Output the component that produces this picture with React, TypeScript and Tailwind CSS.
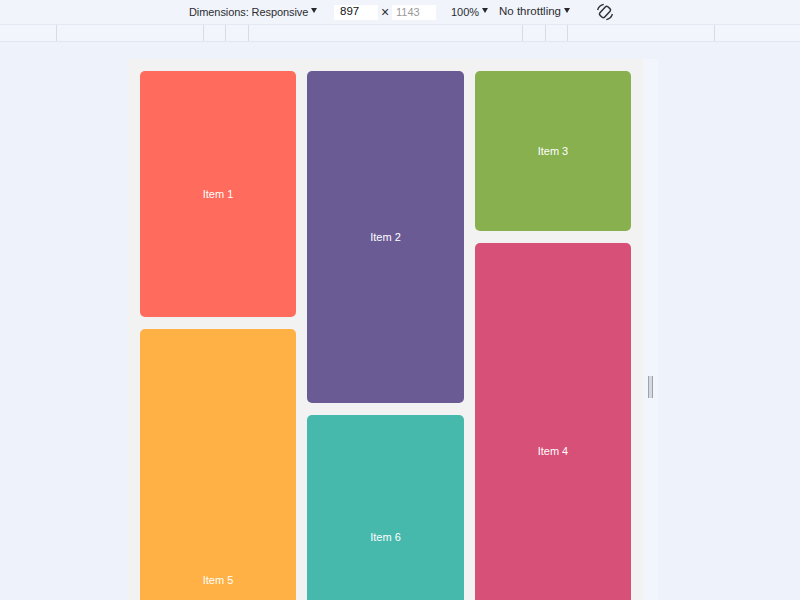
const columns = [
  [
    { label: "Item 1", color: "bg-[#ff6b5c]", height: "h-[246px]" },
    { label: "Item 5", color: "bg-[#ffb146]", height: "h-[502px]" },
  ],
  [
    { label: "Item 2", color: "bg-[#6b5b95]", height: "h-[332px]" },
    { label: "Item 6", color: "bg-[#46b8ac]", height: "h-[244px]" },
  ],
  [
    { label: "Item 3", color: "bg-[#88b04f]", height: "h-[160px]" },
    { label: "Item 4", color: "bg-[#d75077]", height: "h-[416px]" },
  ],
];

const rulerCells = ["w-[57px]", "w-[147px]", "w-[22px]", "w-[23px]", "w-[274px]", "w-[23px]", "w-[22px]", "w-[147px]"];

function Caret() {
  return <span className="ml-[3px] mb-[3px] inline-block h-0 w-0 border-x-[3.5px] border-t-[5px] border-x-transparent border-t-[#26282c]" />;
}

function RotateIcon() {
  return (
    <svg width="18" height="18" viewBox="0 0 18 18" fill="none" stroke="#2f3236" strokeWidth="1.5" className="ml-[26px]">
      <g transform="rotate(42 9 9)">
        <rect x="5.8" y="3.2" width="6.4" height="11.6" rx="1.8" />
        <path d="M3 4.2A8 8 0 0 0 2.2 12.5M15 13.8A8 8 0 0 0 15.8 5.5" strokeWidth="1.4" />
      </g>
    </svg>
  );
}

export default function App() {
  return (
    <div className="flex h-[600px] w-[800px] flex-col overflow-hidden bg-[#eef2fb] font-['Liberation_Sans',sans-serif]">
      <div className="flex h-[25px] shrink-0 items-center border-b border-[#e4e8f2] bg-[#f1f4fb] pl-[189px] text-[11.5px] text-[#2b2d31]">
        <span className="flex w-[145px] items-center text-[11px] tracking-[-0.08px]">Dimensions: Responsive<Caret /></span>
        <span className="flex h-[15px] w-[44px] items-center bg-white pl-[6px] text-[#111318]">897</span>
        <span className="w-[14px] text-center text-[14px] leading-none">×</span>
        <span className="flex h-[15px] w-[44px] items-center bg-white pl-[4px] text-[11px] text-[#9a9a9a]">1143</span>
        <span className="ml-[15px] flex w-[48px] items-center text-[11px]">100%<Caret /></span>
        <span className="flex items-center">No throttling<Caret /></span>
        <RotateIcon />
      </div>
      <div className="flex h-[17px] shrink-0 border-b border-[#e2e6f0] bg-[#f2f5fb]">
        {rulerCells.map((width, index) => (
          <div key={index} className={`${width} h-[16px] shrink-0 border-r border-[#d8dce6]`} />
        ))}
      </div>
      <div className="flex min-h-0 flex-1 pl-[128px] pt-[17px]">
        <div className="w-[515px] shrink-0 bg-[#f2f2f2] px-[12px] pt-[12px]">
          <div className="grid grid-cols-3 gap-x-[11.4px]">
            {columns.map((items, index) => (
              <div key={index} className="flex flex-col gap-[12px]">
                {items.map((item) => (
                  <div
                    key={item.label}
                    className={`${item.color} ${item.height} flex shrink-0 items-center justify-center rounded-[5px] text-[11px] text-white`}
                  >
                    {item.label}
                  </div>
                ))}
              </div>
            ))}
          </div>
        </div>
        <div className="flex h-[656px] w-[15px] shrink-0 items-center justify-center bg-[#f2f5fb]">
          <div className="h-[22px] w-[5px] border-x border-[#9ea2aa] bg-[#d5d8de]" />
        </div>
      </div>
    </div>
  );
}
